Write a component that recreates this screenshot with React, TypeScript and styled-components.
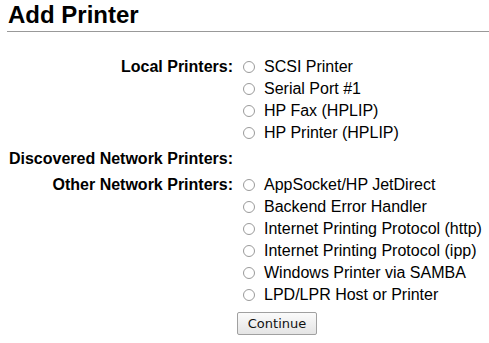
import React from "react";
import styled, { createGlobalStyle } from "styled-components";

const Global = createGlobalStyle`
  html, body { margin: 0; padding: 0; background: #fff; }
  body { font-family: "Liberation Sans", Arial, sans-serif; color: #000; }
`;

const Page = styled.div`
  width: 489px;
  height: 343px;
  overflow: hidden;
`;

const Title = styled.h2`
  margin: 1px 0 0 7px;
  padding: 0 0 2px 1px;
  font-size: 24px;
  line-height: 28px;
  font-weight: bold;
  border-bottom: 1px solid #999;
`;

const Form = styled.div`
  margin-top: 23.5px;
  display: grid;
  grid-template-columns: 233px 1fr;
  column-gap: 10px;
  row-gap: 4px;
`;

const Label = styled.div`
  font-size: 16px;
  line-height: 22px;
  font-weight: bold;
  text-align: right;
  white-space: nowrap;
`;

const Options = styled.div`
  display: flex;
  flex-direction: column;
`;

const Option = styled.label`
  display: flex;
  align-items: center;
  height: 22px;
  font-size: 16px;
  line-height: 22px;
  white-space: nowrap;
`;

const Radio = styled.span`
  box-sizing: border-box;
  width: 12px;
  height: 12px;
  border: 1px solid #9a9a9a;
  border-radius: 50%;
  background: #fff;
  margin-right: 9px;
  flex: none;
`;

const ButtonRow = styled.div`
  grid-column: 2;
  margin-top: 2px;
  margin-left: -6px;
`;

const Button = styled.button`
  box-sizing: border-box;
  width: 80px;
  height: 23px;
  padding: 0;
  font-family: "DejaVu Sans", sans-serif;
  font-size: 13px;
  color: #111;
  border: 1px solid #a0a0a0;
  border-radius: 2px;
  background: linear-gradient(#fbfbfb, #e4e4e4);
`;

const sections = [
  { label: "Local Printers:", items: ["SCSI Printer", "Serial Port #1", "HP Fax (HPLIP)", "HP Printer (HPLIP)"] },
  { label: "Discovered Network Printers:", items: [] as string[] },
  {
    label: "Other Network Printers:",
    items: [
      "AppSocket/HP JetDirect",
      "Backend Error Handler",
      "Internet Printing Protocol (http)",
      "Internet Printing Protocol (ipp)",
      "Windows Printer via SAMBA",
      "LPD/LPR Host or Printer",
    ],
  },
];

export default function App() {
  return (
    <Page>
      <Global />
      <Title>Add Printer</Title>
      <Form>
        {sections.map((s) => (
          <React.Fragment key={s.label}>
            <Label>{s.label}</Label>
            <Options>
              {s.items.map((it) => (
                <Option key={it}>
                  <Radio />
                  {it}
                </Option>
              ))}
            </Options>
          </React.Fragment>
        ))}
        <ButtonRow>
          <Button>Continue</Button>
        </ButtonRow>
      </Form>
    </Page>
  );
}
